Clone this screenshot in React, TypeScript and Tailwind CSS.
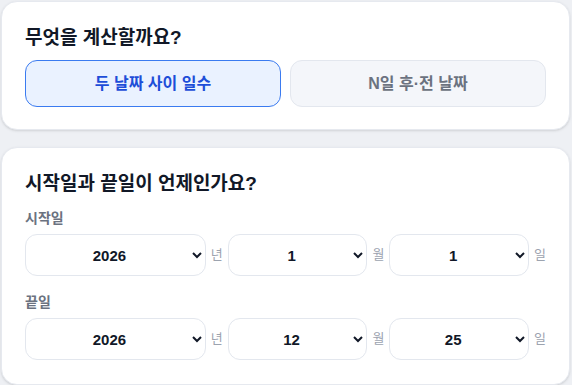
import React, { useState } from 'react';

const FONT = { fontFamily: '"Liberation Sans", "Noto Sans CJK KR", sans-serif' };

const years = Array.from({ length: 21 }, (_, i) => 2016 + i);
const months = Array.from({ length: 12 }, (_, i) => i + 1);
const days = Array.from({ length: 31 }, (_, i) => i + 1);

type DateRowProps = { label: string; y: number; m: number; d: number };

const DateRow = ({ label, y, m, d }: DateRowProps) => {
  const selectCls =
    'h-[42px] min-w-0 rounded-xl border border-[#e3e7ee] bg-white text-[15px] font-bold text-[#111827] text-center [text-align-last:center]';
  return (
    <div>
      <div className="text-sm leading-5 font-bold text-[#6b7280]">{label}</div>
      <div className="mt-1.5 flex items-center gap-[5px]">
        <select defaultValue={y} className={`${selectCls} flex-[1.3]`}>
          {years.map((v) => (
            <option key={v} value={v}>{v}</option>
          ))}
        </select>
        <span className="w-3 text-[13px] text-[#9ca3af]">년</span>
        <select defaultValue={m} className={`${selectCls} flex-1`}>
          {months.map((v) => (
            <option key={v} value={v}>{v}</option>
          ))}
        </select>
        <span className="w-3 text-[13px] text-[#9ca3af]">월</span>
        <select defaultValue={d} className={`${selectCls} flex-1`}>
          {days.map((v) => (
            <option key={v} value={v}>{v}</option>
          ))}
        </select>
        <span className="w-3 text-[13px] text-[#9ca3af]">일</span>
      </div>
    </div>
  );
};

export default function App() {
  const [mode, setMode] = useState<'diff' | 'offset'>('diff');

  return (
    <div style={FONT} className="min-h-screen bg-[#eef0f4] pl-px pt-px pr-[2px] flex flex-col gap-[17px]">
      <section className="rounded-2xl border border-[#e6e9ef] bg-white px-[23px] py-[22px] shadow-sm">
        <h2 className="text-[19px] leading-7 font-bold text-[#111827]">무엇을 계산할까요?</h2>
        <div className="mt-2 grid grid-cols-2 gap-[9px]">
          <button
            onClick={() => setMode('diff')}
            className={`h-[47px] rounded-xl border text-base font-bold ${
              mode === 'diff'
                ? 'border-[#3b7bf0] bg-[#eaf2ff] text-[#1d4ed8]'
                : 'border-[#e3e7ee] bg-[#f4f6fa] text-[#6b7280]'
            }`}
          >
            두 날짜 사이 일수
          </button>
          <button
            onClick={() => setMode('offset')}
            className={`h-[47px] rounded-xl border text-base font-bold ${
              mode === 'offset'
                ? 'border-[#3b7bf0] bg-[#eaf2ff] text-[#1d4ed8]'
                : 'border-[#e3e7ee] bg-[#f4f6fa] text-[#6b7280]'
            }`}
          >
            N일 후·전 날짜
          </button>
        </div>
      </section>

      <section className="rounded-2xl border border-[#e6e9ef] bg-white px-[23px] pt-[22px] pb-6 shadow-sm flex flex-col gap-4">
        <div>
          <h2 className="text-[19px] leading-7 font-bold text-[#111827]">시작일과 끝일이 언제인가요?</h2>
          <div className="mt-2.5">
            <DateRow label="시작일" y={2026} m={1} d={1} />
          </div>
        </div>
        <DateRow label="끝일" y={2026} m={12} d={25} />
      </section>
    </div>
  );
}
